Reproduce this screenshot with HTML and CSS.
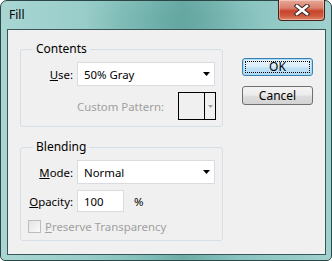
FILE: index.html
```html
<!DOCTYPE html>
<html>
<head>
<meta charset="utf-8">
<link rel="stylesheet" href="styles.css">
</head>
<body>
<div class="window">
  <div class="titlebar">
    <span class="title">Fill</span>
    <div class="close">
      <svg width="16" height="12" viewBox="0 0 16 12">
        <path d="M3 2 L13 10 M13 2 L3 10" stroke="#3a2a2a" stroke-width="4.6" stroke-linecap="square" fill="none"/>
        <path d="M3 2 L13 10 M13 2 L3 10" stroke="#ffffff" stroke-width="2.6" stroke-linecap="square" fill="none"/>
      </svg>
    </div>
  </div>
  <div class="client">
    <div class="groups">
      <fieldset class="group contents">
        <legend>Contents</legend>
        <div class="row">
          <span class="lbl"><u>U</u>se:</span>
          <div class="select"><span>50% Gray</span>
            <svg class="arrow" width="7" height="4" viewBox="0 0 7 4"><path d="M0 0 H7 L3.5 4 Z" fill="#000"/></svg>
          </div>
        </div>
        <div class="row pattern-row">
          <span class="disabled">Custom Pattern:</span>
          <div class="swatch">
            <div class="swatch-box"></div>
            <div class="swatch-drop"><svg width="5" height="3" viewBox="0 0 5 3"><path d="M0 0 H5 L2.5 3 Z" fill="#a0a0a0"/></svg></div>
          </div>
        </div>
      </fieldset>
      <fieldset class="group blending">
        <legend>Blending</legend>
        <div class="row">
          <span class="lbl"><u>M</u>ode:</span>
          <div class="select"><span>Normal</span>
            <svg class="arrow" width="7" height="4" viewBox="0 0 7 4"><path d="M0 0 H7 L3.5 4 Z" fill="#000"/></svg>
          </div>
        </div>
        <div class="row opacity-row">
          <span class="lbl"><u>O</u>pacity:</span>
          <div class="input">100</div>
          <span class="pct">%</span>
        </div>
        <div class="row check-row">
          <span class="checkbox"></span>
          <span class="disabled"><u>P</u>reserve Transparency</span>
        </div>
      </fieldset>
    </div>
    <div class="buttons">
      <div class="btn default"><span class="focus">OK</span></div>
      <div class="btn">Cancel</div>
    </div>
  </div>
</div>
</body>
</html>
```

FILE: styles.css
```css
* { box-sizing: border-box; }
html, body { margin: 0; padding: 0; background: #ffffff; }
body {
  font-family: "Noto Sans", "Open Sans", sans-serif;
  font-size: 11.4px;
  color: #000;
}
.window {
  width: 332px;
  height: 261px;
  border: 1px solid #2c4646;
  border-radius: 7px 7px 5px 5px;
  background:
    radial-gradient(ellipse 90px 40px at 175px 20px, rgba(90,160,154,0.55), rgba(90,160,154,0) 100%),
    linear-gradient(90deg, #a9d6d3 0%, #98cdc9 25%, #80bdb8 45%, #6eaca6 55%, #88c3bf 72%, #a0d1ce 100%);
  padding: 0 5px 5px 6px;
  display: flex;
  flex-direction: column;
}
.titlebar {
  height: 28px;
  display: flex;
  align-items: flex-start;
  justify-content: space-between;
}
.title {
  padding-left: 2px;
  padding-top: 6px;
  line-height: 16px;
  font-size: 12px;
  color: #000;
}
.close {
  width: 47px;
  height: 21px;
  margin-top: -1px;
  margin-right: 1px;
  border: 1px solid #4a2018;
  border-top: none;
  border-radius: 0 0 4px 4px;
  background: linear-gradient(#e9a898 0%, #d9806c 40%, #c8442c 55%, #cf5a3f 80%, #e08a70 100%);
  display: flex;
  align-items: center;
  justify-content: center;
  box-shadow: inset 0 0 0 1px rgba(255,255,255,0.35);
}
.client {
  flex: 1;
  border: 1px solid #3a5656;
  background: #f0f0f0;
  display: flex;
  padding: 11px 12px 0 12px;
  gap: 19px;
}
.groups {
  width: 203px;
  display: flex;
  flex-direction: column;
  gap: 12px;
}
.group {
  margin: 0;
  min-width: 0;
  border: 1px solid #d5dfe5;
  border-radius: 3px;
  padding: 5px 6px 6px 7px;
  display: flex;
  flex-direction: column;
  gap: 6px;
}
.group legend {
  padding: 0 3px;
  margin-left: 5px;
  line-height: 16px;
  font-size: 12px;
  color: #000;
}
.row {
  display: flex;
  align-items: center;
}
.lbl {
  width: 45px;
  margin-right: 4px;
  text-align: right;
  white-space: nowrap;
}
.select {
  width: 138px;
  height: 24px;
  background: #fff;
  border: 1px solid #dadbdf;
  display: flex;
  align-items: center;
  justify-content: space-between;
  padding: 0 4px 0 6px;
}
.pattern-row {
  padding-left: 49px;
  justify-content: space-between;
}
.disabled { color: #a0a0a0; white-space: nowrap; }
.swatch {
  width: 38px;
  height: 28px;
  border: 1px solid #000;
  display: flex;
}
.swatch-box { width: 26px; border-right: 1px solid #000; }
.swatch-drop {
  flex: 1;
  display: flex;
  align-items: center;
  justify-content: center;
}
.input {
  width: 47px;
  height: 22px;
  background: #fff;
  border: 1px solid #dadbdf;
  padding-left: 6px;
  display: flex;
  align-items: center;
}
.pct { margin-left: 10px; }
.check-row { margin-top: 1px; gap: 4px; padding-left: 0; }
.checkbox {
  width: 13px;
  height: 13px;
  border: 1px solid #bcbcbc;
  background: linear-gradient(135deg, #e4e4e4, #fafafa);
}
.buttons {
  display: flex;
  flex-direction: column;
  gap: 10px;
  padding-top: 17px;
}
.btn {
  width: 71px;
  height: 19px;
  border: 1px solid #707070;
  border-radius: 3px;
  background: linear-gradient(#f3f3f3 0%, #ececec 48%, #dedede 52%, #d2d2d2 100%);
  display: flex;
  align-items: center;
  justify-content: center;
  line-height: 14px;
  font-size: 12px;
}
.btn.default {
  height: 18px;
  border-color: #3c7fb1;
  background: linear-gradient(#e8f3fb 0%, #dceefa 48%, #c4e3f7 52%, #b3d9f3 100%);
  box-shadow: inset 0 0 0 1px #a8dcf7;
  padding: 2px;
}
.focus {
  flex: 1;
  align-self: stretch;
  border: 1px dotted #000;
  display: flex;
  align-items: center;
  justify-content: center;
}
```
